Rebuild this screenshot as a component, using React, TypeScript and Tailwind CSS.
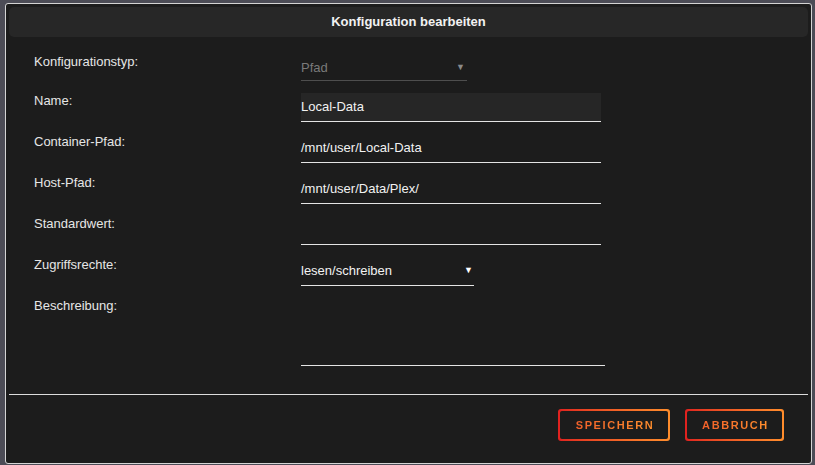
import React from "react";

const font = { fontFamily: '"Liberation Sans", Arial, sans-serif' };

function Field({ label, children, offset }: { label: string; children: React.ReactNode; offset?: string }) {
  return (
    <div className="flex items-start">
      <div className={"w-[267px] shrink-0 text-[13px] leading-4 text-[#e6e6e6] " + (offset ?? "")}>{label}</div>
      {children}
    </div>
  );
}

function TextInput({ value, filled }: { value: string; filled?: boolean }) {
  return (
    <div
      className={
        "w-[300px] h-[29px] border-b border-[#e4e4e4] flex items-center text-[13px] text-[#f2f2f2] " +
        (filled ? "bg-[#262626]" : "")
      }
    >
      {value}
    </div>
  );
}

function GradientButton({ label, width }: { label: string; width: string }) {
  return (
    <div className={"h-[32px] rounded-[3px] p-[2px] bg-gradient-to-r from-[#e0201f] to-[#ff8d2c] " + width}>
      <div className="h-full w-full rounded-[2px] bg-[#1c1c1c] flex items-center justify-center">
        <span className="text-[11px] font-bold tracking-[1.6px] pl-[2px] bg-gradient-to-r from-[#f25f2a] to-[#ff8e2d] bg-clip-text text-transparent">
          {label}
        </span>
      </div>
    </div>
  );
}

export default function App() {
  return (
    <div className="w-[815px] h-[465px] bg-[#4c4c56] overflow-hidden" style={font}>
      <div className="ml-[5px] mt-[3px] w-[807px] h-[461px] border border-[#d4d4d4] rounded-[3px] bg-[#1c1c1c] flex flex-col">
        <div className="mx-[3px] mt-[3px] h-[30px] rounded-[5px] bg-[#272727] flex items-center justify-center text-[13px] font-bold text-[#f2f2f2]">
          Konfiguration bearbeiten
        </div>

        <div className="pl-[28px] pt-[15px] flex flex-col gap-[12px]">
          <Field label="Konfigurationstyp:" offset="pt-[2px]">
            <div className="w-[166px] h-[29px] border-b border-[#4e4e4e] flex items-center justify-between pt-[3px] text-[13px] text-[#7a7a7a]">
              <span>Pfad</span>
              <span className="text-[9px] pr-[2px] text-[#8a8a8a]">▼</span>
            </div>
          </Field>
          <Field label="Name:">
            <TextInput value="Local-Data" filled />
          </Field>
          <Field label="Container-Pfad:">
            <TextInput value="/mnt/user/Local-Data" />
          </Field>
          <Field label="Host-Pfad:">
            <TextInput value="/mnt/user/Data/Plex/" />
          </Field>
          <Field label="Standardwert:">
            <TextInput value="" />
          </Field>
          <Field label="Zugriffsrechte:">
            <div className="w-[173px] h-[29px] border-b border-[#e4e4e4] flex items-center justify-between text-[13px] text-[#f2f2f2]">
              <span>lesen/schreiben</span>
              <span className="text-[9px] pr-[1px] text-white">▼</span>
            </div>
          </Field>
          <Field label="Beschreibung:">
            <div className="w-[304px] h-[68px] border-b border-[#e4e4e4]" />
          </Field>
        </div>

        <div className="mx-[3px] mt-[28px] h-px bg-[#dcdcdc]" />

        <div className="mt-[14px] pr-[27px] flex justify-end gap-[15px]">
          <GradientButton label="SPEICHERN" width="w-[112px]" />
          <GradientButton label="ABBRUCH" width="w-[99px]" />
        </div>
      </div>
    </div>
  );
}
